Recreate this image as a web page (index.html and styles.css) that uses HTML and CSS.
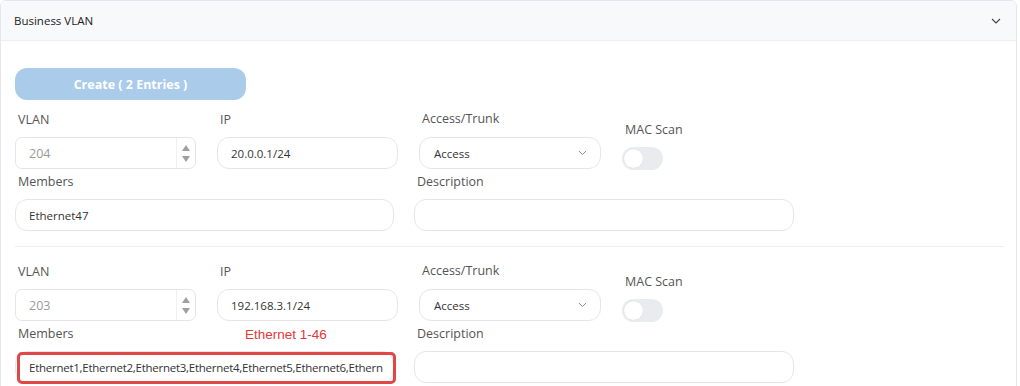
FILE: index.html
```html
<!DOCTYPE html>
<html lang="en">
  <head>
    <meta charset="UTF-8" />
    <meta name="viewport" content="width=device-width, initial-scale=1.0" />
    <title>Business VLAN</title>
    <link rel="stylesheet" href="styles.css">
  </head>
  <body>
    <div class="card">
      <div class="card_header">
        <span>Business VLAN</span>
        <svg class="fold" width="10" height="6" viewBox="0 0 10 6">
          <path d="M1 1 L5 5 L9 1" fill="none" stroke="#444" stroke-width="1.1" />
        </svg>
      </div>

      <div class="card_body">
        <button class="create_button">Create ( 2 Entries )</button>

        <div class="entry">
          <div class="row_top">
            <div class="field">
              <label>VLAN</label>
              <div class="input number">
                <span class="value muted">204</span>
                <span class="spin"><i class="up"></i><i class="down"></i></span>
              </div>
            </div>
            <div class="field">
              <label>IP</label>
              <div class="input"><span class="value">20.0.0.1/24</span></div>
            </div>
            <div class="field">
              <label class="raise">Access/Trunk</label>
              <div class="input select">
                <span class="value">Access</span>
                <svg width="9" height="6" viewBox="0 0 9 6">
                  <path d="M1 1 L4.5 4.5 L8 1" fill="none" stroke="#888" stroke-width="1" />
                </svg>
              </div>
            </div>
            <div class="field mac">
              <label>MAC Scan</label>
              <div class="switch"><span class="knob"></span></div>
            </div>
          </div>
          <div class="row_bottom">
            <div class="field">
              <label>Members</label>
              <div class="input"><span class="value">Ethernet47</span></div>
            </div>
            <div class="field">
              <label>Description</label>
              <div class="input"><span class="value"></span></div>
            </div>
          </div>
        </div>

        <div class="entry">
          <div class="row_top">
            <div class="field">
              <label>VLAN</label>
              <div class="input number">
                <span class="value muted">203</span>
                <span class="spin"><i class="up"></i><i class="down"></i></span>
              </div>
            </div>
            <div class="field">
              <label>IP</label>
              <div class="input"><span class="value">192.168.3.1/24</span></div>
            </div>
            <div class="field">
              <label class="raise">Access/Trunk</label>
              <div class="input select">
                <span class="value">Access</span>
                <svg width="9" height="6" viewBox="0 0 9 6">
                  <path d="M1 1 L4.5 4.5 L8 1" fill="none" stroke="#888" stroke-width="1" />
                </svg>
              </div>
            </div>
            <div class="field mac">
              <label>MAC Scan</label>
              <div class="switch"><span class="knob"></span></div>
            </div>
          </div>
          <div class="row_bottom">
            <div class="field marked">
              <label>Members</label>
              <div class="input"><span class="value long">Ethernet1,Ethernet2,Ethernet3,Ethernet4,Ethernet5,Ethernet6,Ethern</span></div>
              <span class="note">Ethernet 1-46</span>
              <span class="mark"></span>
            </div>
            <div class="field">
              <label>Description</label>
              <div class="input"><span class="value"></span></div>
            </div>
          </div>
        </div>
      </div>
    </div>
  </body>
</html>
```

FILE: styles.css
```css
* {
  margin: 0;
  padding: 0;
  box-sizing: border-box;
}
body {
  font-family: "Open Sans", "Noto Sans", sans-serif;
  color: #333;
  background-color: white;
  overflow: hidden;
}
.card {
  width: 1017px;
  height: 400px;
  border: 1px solid #e4e7eb;
  border-radius: 6px;
  overflow: hidden;
}
.card_header {
  height: 40px;
  background-color: #f8f9fa;
  border-bottom: 1px solid #eceef1;
  display: flex;
  align-items: center;
  justify-content: space-between;
  padding: 0 15px 0 13px;
  font-size: 11.5px;
  color: #222;
}
.fold {
  margin-top: 1px;
}
.card_body {
  padding: 27px 0 0 14px;
}
.create_button {
  display: block;
  width: 231px;
  height: 32px;
  border: none;
  border-radius: 12px;
  background-color: #abcbea;
  color: white;
  font-family: inherit;
  font-size: 12.5px;
  font-weight: 700;
  margin-bottom: 10px;
}
.entry {
  width: 989px;
}
.entry + .entry {
  border-top: 1px solid #eceef1;
  margin-top: 15px;
  padding-top: 15px;
}
.row_top {
  display: grid;
  grid-template-columns: 181px 181px 182px 60px;
  column-gap: 21px;
}
.row_bottom {
  display: grid;
  grid-template-columns: 379px 380px;
  column-gap: 20px;
  margin-top: 2px;
}
.field {
  display: flex;
  flex-direction: column;
}
.field label {
  height: 20px;
  line-height: 20px;
  font-size: 12.5px;
  color: #555;
  padding-left: 3px;
  margin-bottom: 7px;
  white-space: nowrap;
}
.field label.raise {
  margin-top: -1px;
  margin-bottom: 8px;
}
.input {
  height: 32px;
  border: 1px solid #e3e6ea;
  border-radius: 12px;
  display: flex;
  align-items: center;
  padding: 0 0 0 13px;
  overflow: hidden;
  background-color: white;
}
.value {
  flex: 1;
  font-size: 11.5px;
  color: #333;
  white-space: nowrap;
  overflow: hidden;
  margin-right: 8px;
}
.value.long {
  letter-spacing: -0.26px;
}
.value.muted {
  color: #9a9a9a;
  font-size: 12.5px;
}
.number {
  border-radius: 7px;
  padding-right: 0;
}
.spin {
  width: 19px;
  height: 100%;
  border-left: 1px solid #eef0f2;
  display: flex;
  flex-direction: column;
  align-items: center;
  justify-content: center;
  gap: 5px;
}
.spin i {
  width: 0;
  height: 0;
  border-left: 4px solid transparent;
  border-right: 4px solid transparent;
}
.spin .up {
  border-bottom: 6px solid #a0a0a0;
}
.spin .down {
  border-top: 6px solid #a0a0a0;
}
.select {
  padding-left: 14px;
  padding-right: 13px;
}
.mac {
  padding-top: 10px;
}
.switch {
  width: 41px;
  height: 23px;
  border-radius: 12px;
  background-color: #e9ecef;
  padding: 2px;
}
.knob {
  display: block;
  width: 19px;
  height: 19px;
  border-radius: 50%;
  background-color: white;
  box-shadow: 0 0 1px rgba(0, 0, 0, 0.15);
}
.marked {
  position: relative;
}
.note {
  position: absolute;
  left: 230px;
  top: 3px;
  font-family: "Liberation Sans", Arial, sans-serif;
  font-size: 13.5px;
  color: #e3383a;
}
.mark {
  position: absolute;
  left: 2px;
  top: 28px;
  width: 379px;
  height: 32px;
  border: 3px solid #e04848;
  border-radius: 5px;
}
```
